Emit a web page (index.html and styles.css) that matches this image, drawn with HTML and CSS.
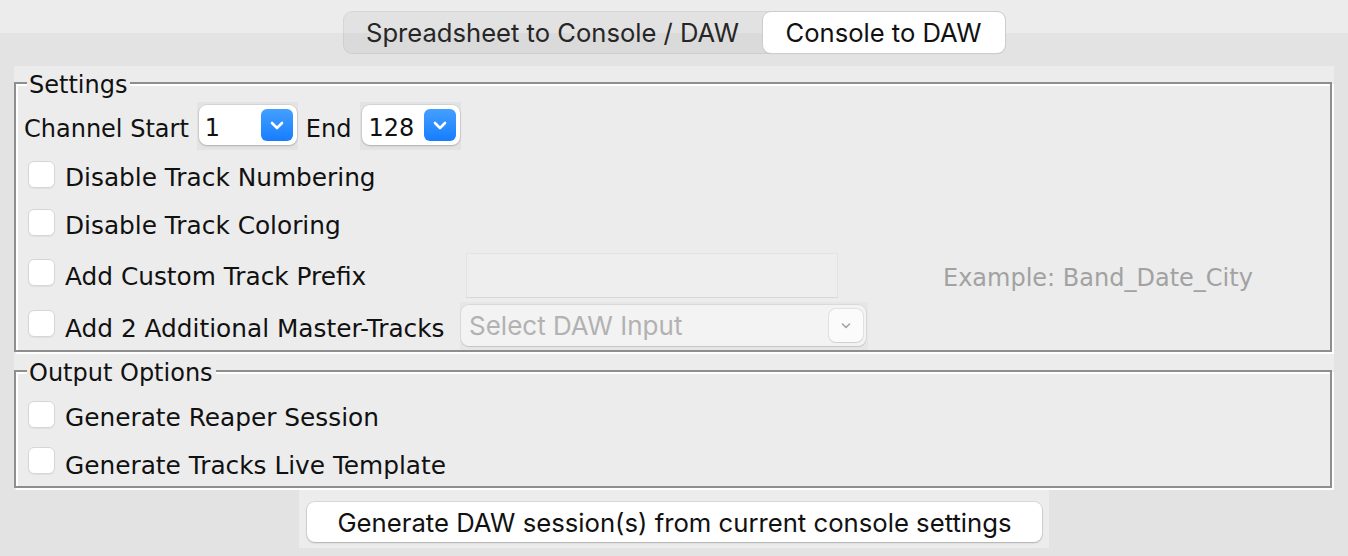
FILE: index.html
```html
<!DOCTYPE html>
<html>
<head>
<meta charset="utf-8">
<link rel="stylesheet" href="styles.css">
</head>
<body>
<div class="top">
  <div class="tabs">
    <div class="tab">Spreadsheet to Console / DAW</div>
    <div class="tab tab-active">Console to DAW</div>
  </div>
</div>

<div class="panel">
  <fieldset class="group group-settings">
    <legend>Settings</legend>
    <div class="row row-channels">
      <span class="label">Channel Start</span>
      <div class="combo-wrap">
        <div class="combo">
          <span class="combo-value">1</span>
          <span class="combo-btn"><svg width="14" height="9" viewBox="0 0 14 9"><path d="M2 2 L7 7 L12 2" fill="none" stroke="#fff" stroke-width="2.6" stroke-linecap="round" stroke-linejoin="round"/></svg></span>
        </div>
      </div>
      <span class="label label-end">End</span>
      <div class="combo-wrap combo-wrap-end">
        <div class="combo">
          <span class="combo-value">128</span>
          <span class="combo-btn"><svg width="14" height="9" viewBox="0 0 14 9"><path d="M2 2 L7 7 L12 2" fill="none" stroke="#fff" stroke-width="2.6" stroke-linecap="round" stroke-linejoin="round"/></svg></span>
        </div>
      </div>
    </div>
    <div class="row row-check row-2">
      <span class="check"></span><span class="label">Disable Track Numbering</span>
    </div>
    <div class="row row-check row-3">
      <span class="check"></span><span class="label">Disable Track Coloring</span>
    </div>
    <div class="grid">
      <div class="row row-check row-4">
        <span class="check"></span><span class="label">Add Custom Track Prefix</span>
      </div>
      <div class="textfield"></div>
      <div class="example">Example: Band_Date_City</div>
      <div class="row row-check row-5">
        <span class="check"></span><span class="label">Add 2 Additional Master-Tracks</span>
      </div>
      <div class="select-wrap">
        <div class="select">
          <span class="select-placeholder">Select DAW Input</span>
          <span class="select-btn"><svg width="12" height="8" viewBox="0 0 12 8"><path d="M2.5 2 L6 5.5 L9.5 2" fill="none" stroke="#a3a3a3" stroke-width="1.6" stroke-linecap="round" stroke-linejoin="round"/></svg></span>
        </div>
      </div>
    </div>
  </fieldset>

  <fieldset class="group group-output">
    <legend>Output Options</legend>
    <div class="row row-check row-o1">
      <span class="check"></span><span class="label">Generate Reaper Session</span>
    </div>
    <div class="row row-check row-o2">
      <span class="check"></span><span class="label">Generate Tracks Live Template</span>
    </div>
  </fieldset>
</div>

<div class="footer">
  <div class="footer-inner">
    <div class="button">Generate DAW session(s) from current console settings</div>
  </div>
</div>
</body>
</html>
```

FILE: styles.css
```css
html, body {
  margin: 0;
  padding: 0;
}
body {
  width: 1348px;
  height: 556px;
  overflow: hidden;
  background: #e3e3e3;
  font-family: "DejaVu Sans", sans-serif;
  font-size: 24px;
  color: #111;
}

/* ---------- tabs ---------- */
.top {
  background: linear-gradient(#ececec 0, #ececec 33px, #e3e3e3 33px);
  padding-top: 11px;
  display: flex;
  justify-content: center;
}
.tabs {
  display: flex;
  padding: 1px;
  border-radius: 9px;
  background: rgba(0, 0, 0, 0.04);
  box-shadow: inset 0 0 0 1px rgba(0, 0, 0, 0.05);
}
.tab {
  height: 41px;
  display: flex;
  align-items: center;
  justify-content: center;
  font-family: "Inter", "Roboto", sans-serif;
  font-size: 25.6px;
  color: #262626;
  border-radius: 8px;
}
.tab:first-child {
  width: 418px;
}
.tab-active {
  width: 242px;
  margin-left: 1px;
  background: #fff;
  color: #111;
  box-shadow: 0 0 0 1px #cdcdcd, 0 1px 1px rgba(0, 0, 0, 0.12);
}

/* ---------- panel ---------- */
.panel {
  margin: 12px 14px 0 14px;
  background: #ececec;
  padding-bottom: 2px;
}
.group {
  margin: 0;
  padding: 0;
  min-width: 0;
  border: 2px solid #8e8e8e;
  box-shadow: inset 2px 2px 0 #fff, 2px 2px 0 #fff;
  width: 1318px;
  box-sizing: border-box;
}
.group legend {
  margin-left: 11px;
  padding: 5px 3px 0 2px;
  line-height: 29px;
  background: #ececec;
  font-size: 24px;
  color: #111;
}
.group-output {
  margin-top: 2px;
}

.row {
  display: flex;
  align-items: center;
}
.label {
  white-space: nowrap;
}
.row-check .label {
  font-size: 24.8px;
}
.row-channels {
  margin-top: 2px;
  height: 48px;
  padding-left: 8px;
}
.row-channels .label,
.combo-value {
  padding-top: 5px;
}
.check {
  width: 27px;
  height: 27px;
  box-sizing: border-box;
  flex: none;
  border-radius: 6px;
  background: #fff;
  border: 1px solid #d6d6d6;
  box-shadow: 0 1px 1px rgba(0, 0, 0, 0.05);
  margin: -6px 10px 0 0;
}
.row-check {
  padding-left: 12px;
}
.row-2 { margin-top: 2px; height: 50px; }
.row-3 { height: 46px; }

/* combos */
.combo-wrap {
  margin-left: 8px;
  width: 101px;
  height: 48px;
  background: #e3e3e3;
  box-sizing: border-box;
  padding: 3px 1px 5px 2px;
}
.combo-wrap-end {
  margin-left: 9px;
}
.label-end {
  margin-left: 8px;
}
.combo {
  height: 40px;
  background: #fff;
  border-radius: 8px;
  box-shadow: 0 0 0 1px rgba(0, 0, 0, 0.06), 0 1px 2px rgba(0, 0, 0, 0.18);
  display: flex;
  align-items: center;
  justify-content: space-between;
  padding: 0 4px 0 6px;
}
.combo-value {
  font-size: 24px;
  color: #111;
}
.combo-btn {
  width: 32px;
  height: 32px;
  border-radius: 6px;
  background: linear-gradient(#44a0ff, #167dff);
  display: flex;
  align-items: center;
  justify-content: center;
}

/* grid for prefix / master rows */
.grid {
  display: grid;
  grid-template-columns: 444px 408px auto;
  grid-template-rows: 50px 48px;
  row-gap: 2px;
  margin-top: 2px;
}
.textfield {
  align-self: center;
  margin-left: 6px;
  width: 372px;
  height: 45px;
  box-sizing: border-box;
  background: #eeeeee;
  border: 1px solid #e3e3e3;
  border-bottom-color: #d7d7d7;
}
.example {
  align-self: center;
  padding-left: 75px;
  color: #a2a2a2;
  white-space: nowrap;
  padding-top: 5px;
}
.row-4 .label {
  padding-top: 2px;
}
.row-5 .label {
  padding-top: 4px;
}
.select-wrap {
  background: #e6e6e6;
  box-sizing: border-box;
  padding: 3px 2px 4px 1px;
  height: 48px;
}
.select {
  height: 41px;
  box-sizing: border-box;
  background: #f3f3f3;
  border-radius: 8px;
  box-shadow: 0 0 0 1px rgba(0, 0, 0, 0.05), 0 1px 1px rgba(0, 0, 0, 0.1);
  display: flex;
  align-items: center;
  justify-content: space-between;
  padding: 0 3px 0 8px;
}
.select-placeholder {
  color: #b2b2b2;
  font-family: "Inter", "Roboto", sans-serif;
  font-size: 26px;
}
.select-btn {
  width: 34px;
  height: 33px;
  box-sizing: border-box;
  border-radius: 7px;
  background: #fbfbfb;
  box-shadow: 0 0 0 1px rgba(0, 0, 0, 0.07), 0 1px 1px rgba(0, 0, 0, 0.08);
  display: flex;
  align-items: center;
  justify-content: center;
}

/* output options */
.row-o1 { margin-top: 5px; height: 48px; }
.row-o2 { height: 45px; }
.row-o2 .label { padding-top: 3px; }

/* footer */
.footer {
  display: flex;
  justify-content: center;
}
.footer-inner {
  background: #ececec;
  width: 750px;
  padding: 12px 7px 6px 8px;
  box-sizing: border-box;
}
.button {
  height: 40px;
  background: #fff;
  border-radius: 8px;
  box-shadow: 0 0 0 1px rgba(0, 0, 0, 0.08), 0 1px 2px rgba(0, 0, 0, 0.2);
  display: flex;
  align-items: center;
  justify-content: center;
  font-family: "Inter", "Roboto", sans-serif;
  font-size: 25.7px;
  color: #111;
}
```
